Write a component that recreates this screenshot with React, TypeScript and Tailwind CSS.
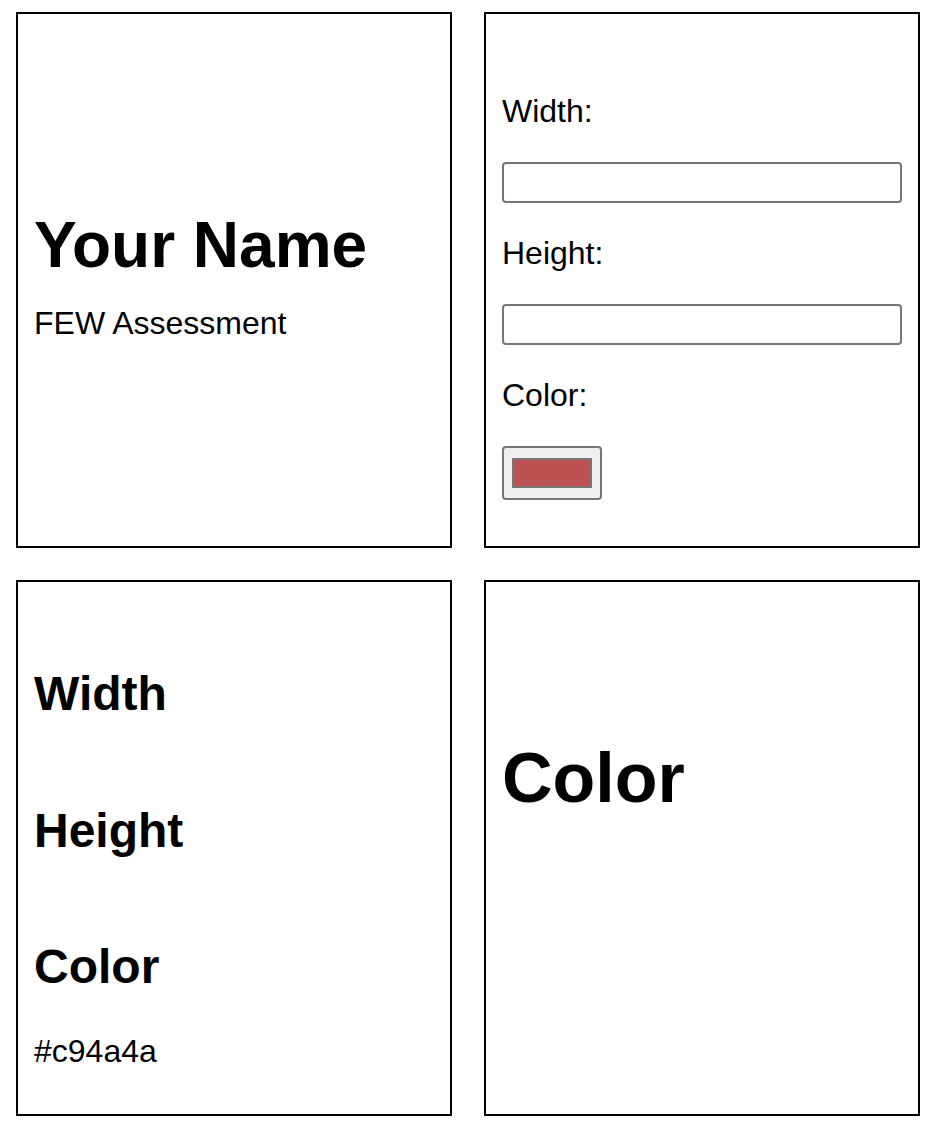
import React from "react";

export default function App() {
  return (
    <div
      className="min-h-[1138px] w-[938px] bg-white pl-4 pt-3 text-black"
      style={{ fontFamily: '"Liberation Sans", Arial, sans-serif' }}
    >
      <div className="grid grid-cols-[436px_436px] grid-rows-[536px_536px] gap-8">
        {/* Box 1 */}
        <div className="flex flex-col border-2 border-black px-4 pt-[195px]">
          <h1 className="text-[64px] font-bold leading-[1.15]">Your Name</h1>
          <p className="mt-[22px] text-[32px] leading-[1.15]">FEW Assessment</p>
        </div>

        {/* Box 2 */}
        <div className="flex flex-col gap-8 border-2 border-black px-4 pt-[79px]">
          <label className="text-[32px] leading-[37px]">Width:</label>
          <input
            type="text"
            className="h-[41px] w-full shrink-0 rounded-[4px] border-2 border-[#767676] bg-white px-1 outline-none"
          />
          <label className="text-[32px] leading-[37px]">Height:</label>
          <input
            type="text"
            className="h-[41px] w-full shrink-0 rounded-[4px] border-2 border-[#767676] bg-white px-1 outline-none"
          />
          <label className="text-[32px] leading-[37px]">Color:</label>
          <div className="flex h-[54px] w-[100px] shrink-0 items-center justify-center rounded-[4px] border-2 border-[#767676] bg-[#efefef] px-2 py-[10px]">
            <div className="h-full w-full border-2 border-[#777777] bg-[#bb5150]" />
          </div>
        </div>

        {/* Box 3 */}
        <div className="flex flex-col border-2 border-black px-4 pt-[84px]">
          <h2 className="text-[48px] font-bold leading-[1.15]">Width</h2>
          <h2 className="mt-[82px] text-[48px] font-bold leading-[1.15]">Height</h2>
          <h2 className="mt-[81px] text-[48px] font-bold leading-[1.15]">Color</h2>
          <p className="mt-[38px] text-[32px] leading-[1.15]">#c94a4a</p>
        </div>

        {/* Box 4 */}
        <div className="flex flex-col border-2 border-black px-4 pt-[156px]">
          <h1 className="text-[70px] font-bold leading-[1.15]">Color</h1>
        </div>
      </div>
    </div>
  );
}
